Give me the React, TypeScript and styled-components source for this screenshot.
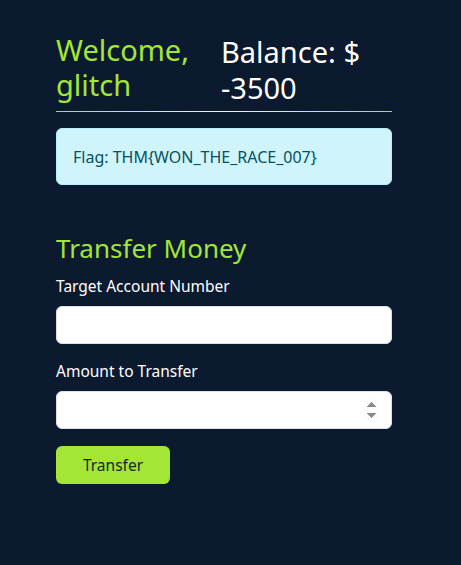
import React from "react";
import styled, { createGlobalStyle } from "styled-components";

const GlobalStyle = createGlobalStyle`
  html, body {
    margin: 0;
    padding: 0;
    background: #0c1a30;
  }
  body {
    font-family: "Noto Sans", "Open Sans", sans-serif;
    color: #ffffff;
  }
`;

const Page = styled.div`
  min-height: 565px;
  padding: 32px 0 0 56px;
  box-sizing: border-box;
`;

const Container = styled.div`
  width: 336px;
`;

const Header = styled.div`
  display: flex;
  gap: 16px;
  padding-bottom: 5px;
  border-bottom: 1px solid transparent;
  border-image: linear-gradient(90deg, #a3e635, #ecfccb 50%, #a3e635) 1;
`;

const Welcome = styled.h1`
  flex: 0 0 149px;
  margin: 0;
  font-size: 29px;
  font-weight: 400;
  line-height: 35px;
  color: #a3e635;
`;

const Balance = styled.h2`
  flex: 1;
  margin: 2px 0 0;
  font-size: 29px;
  font-weight: 400;
  line-height: 36px;
  color: #ffffff;
`;

const Alert = styled.div`
  margin-top: 16px;
  padding: 16px 16px;
  height: 57px;
  box-sizing: border-box;
  background: #cff4fc;
  border: 1px solid #b6effb;
  border-radius: 6px;
  color: #055160;
  font-size: 16px;
  line-height: 24px;
`;

const Section = styled.h2`
  margin: 47px 0 10px;
  font-size: 26px;
  font-weight: 400;
  line-height: 32px;
  color: #a3e635;
`;

const Form = styled.form`
  display: flex;
  flex-direction: column;
`;

const Label = styled.label`
  font-size: 15.5px;
  line-height: 24px;
  margin-bottom: 8px;
`;

const Input = styled.input`
  height: 38px;
  box-sizing: border-box;
  margin-bottom: 15px;
  padding: 6px 12px;
  border: 1px solid #dee2e6;
  border-radius: 6px;
  background: #ffffff;
  font-family: inherit;
  font-size: 16px;
  outline: none;

  &::-webkit-inner-spin-button {
    opacity: 1;
  }
`;

const Button = styled.button`
  align-self: flex-start;
  width: 114px;
  height: 38px;
  margin-top: 2px;
  border: none;
  border-radius: 6px;
  background: #a3e635;
  color: #1a1f2b;
  font-family: inherit;
  font-size: 15.5px;
  cursor: pointer;
`;

export default function App() {
  return (
    <>
      <GlobalStyle />
      <Page>
        <Container>
          <Header>
            <Welcome>Welcome, glitch</Welcome>
            <Balance>Balance: $ -3500</Balance>
          </Header>
          <Alert>Flag: THM&#123;WON_THE_RACE_007&#125;</Alert>
          <Section>Transfer Money</Section>
          <Form onSubmit={(e) => e.preventDefault()}>
            <Label htmlFor="target">Target Account Number</Label>
            <Input id="target" type="text" />
            <Label htmlFor="amount">Amount to Transfer</Label>
            <Input id="amount" type="number" />
            <Button type="submit">Transfer</Button>
          </Form>
        </Container>
      </Page>
    </>
  );
}
